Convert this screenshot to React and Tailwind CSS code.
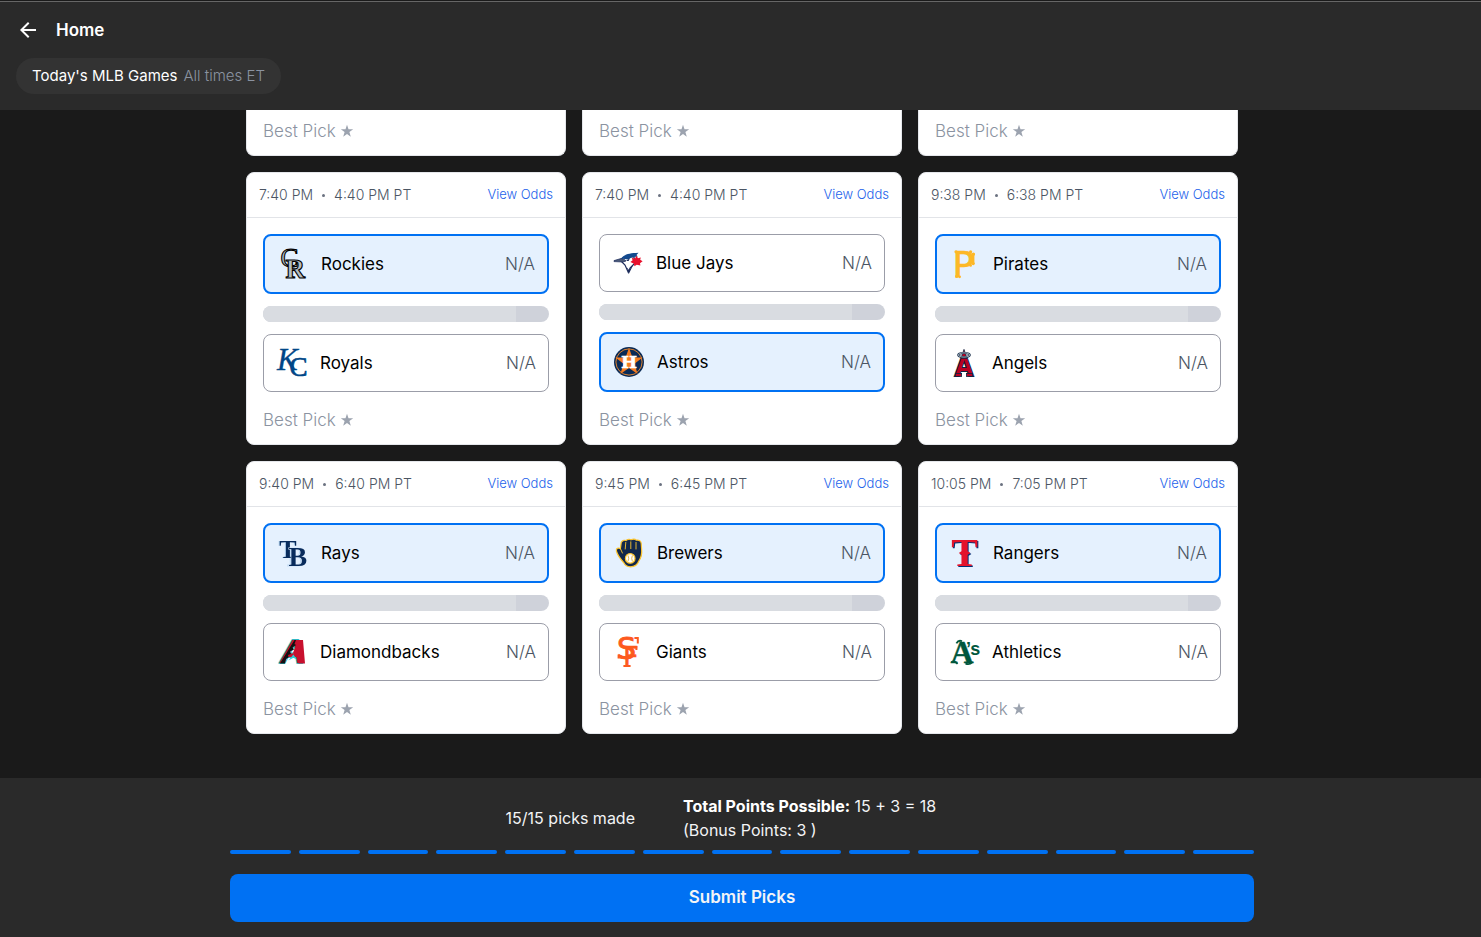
import React, { useState } from "react";
import { MdArrowBack } from "react-icons/md";

const SERIF = "'Liberation Serif', serif";
const SLAB = "'DejaVu Serif', serif";
const SANS = "'Liberation Sans', sans-serif";
const WIDE = "'DejaVu Sans', sans-serif";

function Logo({ children }) {
  return (
    <svg viewBox="0 0 32 32" className="size-8 shrink-0 overflow-visible" aria-hidden="true">
      {children}
    </svg>
  );
}

const logos = {
  Rockies: (
    <Logo>
      <g fontFamily={SERIF} fill="#b4bec4" stroke="#000" strokeWidth="1.1">
        <text x="3.4" y="19.4" fontSize="27">C</text>
        <text x="8.6" y="30.4" fontSize="27" fontWeight="bold">R</text>
      </g>
    </Logo>
  ),
  Royals: (
    <Logo>
      <g fontFamily={SERIF} fill="#004687" stroke="#004687" strokeWidth="0.3">
        <text x="1" y="22.5" fontSize="31" fontStyle="italic">K</text>
        <text x="13.6" y="29" fontSize="27" strokeWidth="0.7">C</text>
      </g>
    </Logo>
  ),
  "Blue Jays": (
    <Logo>
      <path d="M8 13 L13 18 L16.3 25.5 L18 21 L23 16 L22 10 L12 10Z" fill="#fff" stroke="#1d2d5c" strokeWidth="1.2" />
      <path d="M2 13.6 L9 11.5 L12 12.2 L14 14 L11 15 L2 14.6Z" fill="#4b5a78" stroke="#1d2d5c" strokeWidth="0.7" />
      <path d="M9 11.6 C12 7.5 17 6.2 26.5 5.8 L24.5 8 L25.8 9.5 L20 10.3 L16 12.6Z" fill="#134a8e" />
      <path d="M14 14 L18 11 L16.6 14Z" fill="#1d2d5c" />
      <path d="M14.5 20 L17 23 L21.5 17.5 L17 26.6Z" fill="#1d2d5c" />
      <path d="M24.5 8.8 L26 11.2 L28.8 10.4 L28.2 12.8 L30.6 14.2 L28 16.2 L28.4 18.4 L24.8 17.8 L22.4 19.2 L22 16.8 L18.4 15 L20.6 13.2 L19.8 11 L23 11.6Z" fill="#e8112d" />
    </Logo>
  ),
  Astros: (
    <Logo>
      <circle cx="16" cy="16" r="15" fill="#0a2a55" />
      <circle cx="16" cy="16" r="13.1" fill="none" stroke="#f08a2c" strokeWidth="0.9" />
      <path d="M16 1.8 L19.4 11.5 L29.6 11.6 L21.5 17.8 L24.6 28 L16 22 L7.4 28 L10.5 17.8 L2.4 11.6 L12.6 11.5Z" fill="#f47b20" />
      <text x="16" y="22.4" fontSize="17" fontWeight="bold" fontFamily={SLAB} textAnchor="middle" fill="#fff" stroke="#fff" strokeWidth="0.5">H</text>
    </Logo>
  ),
  Pirates: (
    <Logo>
      <text x="3.4" y="29" fontSize="36" fontFamily={WIDE} fill="#fdb827" stroke="#fdb827" strokeWidth="0.6">P</text>
      <g fill="#fdb827">
        <circle cx="7" cy="3.8" r="1.6" />
        <circle cx="7.6" cy="28.4" r="1.6" />
        <circle cx="10.6" cy="28.8" r="1.4" />
        <circle cx="21.6" cy="3.8" r="1.6" />
        <circle cx="24.4" cy="6.2" r="1.6" />
        <circle cx="24.2" cy="15.6" r="1.6" />
        <circle cx="21.6" cy="17.4" r="1.4" />
        <rect x="22.4" y="5" width="3" height="11" />
      </g>
    </Logo>
  ),
  Angels: (
    <Logo>
      <g stroke="#0c2340" fill="#ba0021">
        <text x="16" y="29" fontSize="27" fontWeight="bold" textAnchor="middle" fontFamily={SANS} strokeWidth="2" paintOrder="stroke">A</text>
        <rect x="7.6" y="26.4" width="6" height="3" strokeWidth="0.8" />
        <rect x="18.4" y="26.4" width="6" height="3" strokeWidth="0.8" />
        <path d="M16 2.4 L19 11.4 H13Z" strokeWidth="0.8" />
      </g>
      <ellipse cx="16" cy="8" rx="5.8" ry="2.1" fill="none" stroke="#0c2340" strokeWidth="2" />
      <ellipse cx="16" cy="8" rx="5.8" ry="2.1" fill="none" stroke="#b6c2cc" strokeWidth="0.9" />
    </Logo>
  ),
  Rays: (
    <Logo>
      <g fontFamily={SERIF} fontWeight="bold" fill="#092c5c" className="drop-shadow-[-1px_0px_0px_#b7d6f2]">
        <text x="2.3" y="20.6" fontSize="26">T</text>
        <text x="11.4" y="28.6" fontSize="28" stroke="#e5f1fe" strokeWidth="1" paintOrder="stroke">B</text>
      </g>
    </Logo>
  ),
  Diamondbacks: (
    <Logo>
      <text x="4" y="27.4" fontSize="34" fontWeight="bold" fontStyle="italic" fontFamily={SANS} fill="#c8102e" stroke="#30b8c4" strokeWidth="2" strokeLinejoin="round" paintOrder="stroke">A</text>
      <path d="M4 27.5 L18.5 4 L20 4 L18.5 8 L20 9 L16.5 11.5 L18 13.5 L14 15.5 L15 18 L12 19 L12.6 21.5 L10 23 L9 27.5Z" fill="#111" />
      <path d="M20.5 4 H27 L29 27.5 H22.5 L21 21 L17 17 L18.4 13 L20.4 9Z" fill="#c8102e" />
      <path d="M12.4 24.4 L17.4 18.5 L21 24 L17.5 21.8Z" fill="#30ced8" />
      <path d="M15.2 27 L17.4 23.2 L20 27Z" fill="#fff" />
    </Logo>
  ),
  Brewers: (
    <Logo>
      <path
        d="M11 26 C8 22.6 4.4 18 3.4 14 C3 11.4 5 10.4 7.4 11.6 L8.2 5.6 C9.4 3 12 3 13 3.6 C14.4 2 17 2 18 2.8 C20 1.8 22.4 2.2 23.2 3.2 C26 2.6 28.2 4 28.2 6.6 L28.6 12 C29.2 18 28 21 25.8 24 C24.4 28 21 29.8 17.4 29.8 C14 29.6 12 28 11 26Z"
        fill="#12284b" stroke="#fdc52f" strokeWidth="1.2"
      />
      <path d="M12.8 5 L12.2 12.4 M17.8 4.4 V12 M23 5 V12.4" stroke="#fdc52f" strokeWidth="0.9" fill="none" />
      <path d="M7.4 11.6 L9.6 16.4" stroke="#fdc52f" strokeWidth="0.9" fill="none" />
      <circle cx="17.2" cy="21.4" r="4.8" fill="#fff" stroke="#fdc52f" strokeWidth="1.2" />
      <path d="M15 18.4 Q16.4 21.4 15 24.4 M19.4 18.4 Q18 21.4 19.4 24.4" stroke="#d9a928" strokeWidth="0.8" fill="none" />
    </Logo>
  ),
  Giants: (
    <Logo>
      <g fill="#fd5a1e" stroke="#fd5a1e">
        <text x="5" y="23.4" fontSize="30" fontFamily={WIDE} strokeWidth="0.9">S</text>
        <text x="11" y="30" fontSize="27" fontFamily={WIDE} strokeWidth="0.5">F</text>
      </g>
      <path d="M22.4 2 H25.8 V7.4 M24.4 10 V14 M11.4 30 H18.6 M6.6 18.4 V22.6" fill="none" stroke="#fd5a1e" strokeWidth="2" />
    </Logo>
  ),
  Rangers: (
    <Logo>
      <g className="drop-shadow-[1px_1px_0px_#003278]">
        <text x="15.6" y="28.6" fontFamily={SERIF} fontWeight="bold" fontSize="40" textAnchor="middle" fill="#e4132b">T</text>
        <path d="M9.8 16 L12.5 14.2 H18.7 L21.4 16 L18.7 17.8 H12.5Z" fill="#e4132b" />
      </g>
    </Logo>
  ),
  Athletics: (
    <Logo>
      <g fill="#00573d" stroke="#00573d" fontWeight="bold">
        <text x="2.6" y="27" fontSize="32" fontFamily={SERIF} strokeWidth="0.4">A</text>
        <text x="18" y="19.2" fontSize="18" fontFamily={SANS} strokeWidth="0">’s</text>
      </g>
      <path d="M8.4 7.4 Q10.5 3.6 14 5.2 M3.4 26 Q6.5 24.4 9.6 27.8 M17.5 27.4 Q21 29.4 24.6 26" stroke="#00573d" strokeWidth="1.8" fill="none" />
    </Logo>
  ),
};

const games = [
  { et: "7:40 PM", pt: "4:40 PM PT", teams: ["Rockies", "Royals"], pick: 0 },
  { et: "7:40 PM", pt: "4:40 PM PT", teams: ["Blue Jays", "Astros"], pick: 1 },
  { et: "9:38 PM", pt: "6:38 PM PT", teams: ["Pirates", "Angels"], pick: 0 },
  { et: "9:40 PM", pt: "6:40 PM PT", teams: ["Rays", "Diamondbacks"], pick: 0 },
  { et: "9:45 PM", pt: "6:45 PM PT", teams: ["Brewers", "Giants"], pick: 0 },
  { et: "10:05 PM", pt: "7:05 PM PT", teams: ["Rangers", "Athletics"], pick: 0 },
];

function TeamButton({ name, selected, onClick }) {
  return (
    <button
      type="button"
      aria-pressed={selected}
      onClick={onClick}
      className={
        selected
          ? "flex h-[60px] w-full items-center gap-3 rounded-lg border-2 border-[#0071f3] bg-[#e5f1fe] px-3"
          : "flex h-[58px] w-full items-center gap-3 rounded-lg border border-[#9b9da8] bg-white px-3"
      }
    >
      {logos[name]}
      <span className="text-[17px] leading-6 text-black">{name}</span>
      <span className="ml-auto text-[17px] leading-6 font-light text-[#4b5563]">N/A</span>
    </button>
  );
}

function BestPick() {
  return (
    <button type="button" className="flex items-center gap-1 text-[17px] leading-6 font-light text-[#8b93a1]">
      Best Pick
      <svg viewBox="0 0 14 14" className="size-3.5" fill="#9ca3af" aria-hidden="true">
        <path d="M7 .8 8.5 5.2h4.7L9.4 8l1.4 4.7L7 9.9l-3.8 2.8L4.6 8 .8 5.2h4.7z" />
      </svg>
    </button>
  );
}

function GameCard({ game }) {
  const [pick, setPick] = useState(game.pick);
  return (
    <article className="rounded-lg border border-[#e5e7eb] bg-white">
      <div className="flex h-[45px] items-center justify-between border-b border-[#e2e4e8] px-3">
        <p className="flex items-center gap-2 text-sm font-light text-[#4b5563]">
          <span>{game.et}</span>
          <span className="mx-px size-[3px] rounded-full bg-[#6b7280]" />
          <span>{game.pt}</span>
        </p>
        <a href="#odds" className="text-[13px] font-light text-[#2463eb]">View Odds</a>
      </div>
      <div className="px-4 pt-4 pb-3">
        <TeamButton name={game.teams[0]} selected={pick === 0} onClick={() => setPick(0)} />
        <div className="my-3 flex h-4 overflow-hidden rounded-full bg-[#cfd2da]">
          <div className="w-[88.5%] bg-[#d9dce1]" />
        </div>
        <TeamButton name={game.teams[1]} selected={pick === 1} onClick={() => setPick(1)} />
        <div className="mt-4">
          <BestPick />
        </div>
      </div>
    </article>
  );
}

export default function App() {
  return (
    <div className="flex min-h-screen flex-col bg-[#1a1a1a] pt-px font-['Inter','Liberation_Sans',sans-serif] text-white">
      <header className="border-t border-[#666666] bg-[#2a2a2a] p-4">
        <a href="#home" className="flex w-fit items-center gap-4 text-[17px] leading-6 font-semibold">
          <MdArrowBack size={24} aria-hidden="true" />
          Home
        </a>
        <h1 className="mt-4 flex h-9 w-fit items-center gap-1.5 rounded-full bg-[#333333] px-4 text-[15px] font-normal">
          Today's MLB Games
          <span className="font-light text-[#8b93a1]">All times ET</span>
        </h1>
      </header>

      <main className="flex-1 pb-11 pl-[3px]">
        <div className="mx-auto grid max-w-[992px] grid-cols-1 gap-4 sm:grid-cols-2 lg:grid-cols-3">
          {[0, 1, 2].map((i) => (
            <div key={i} className="rounded-b-lg border border-t-0 border-[#e5e7eb] bg-white px-4 pt-[9px] pb-3">
              <BestPick />
            </div>
          ))}
          {games.map((game) => (
            <GameCard key={game.teams[0]} game={game} />
          ))}
        </div>
      </main>

      <footer className="bg-[#2a2a2a] pt-4 pb-[15px] pl-[3px]">
        <div className="mx-auto max-w-[1024px]">
          <div className="grid grid-cols-[405fr_571fr] items-center gap-12 text-base leading-6 text-[#f3f4f6]">
            <p className="text-right">15/15 picks made</p>
            <div>
              <p>
                <strong className="font-bold text-white">Total Points Possible:</strong> 15 + 3 = 18
              </p>
              <p>(Bonus Points: 3 )</p>
            </div>
          </div>
          <div className="mt-2 flex gap-2">
            {Array.from({ length: 15 }, (_, i) => (
              <div key={i} className="h-1 flex-1 rounded-full bg-[#0071f3]" />
            ))}
          </div>
          <button type="button" className="mt-5 h-12 w-full rounded-lg bg-[#0071f3] text-[17px] font-semibold text-[#f3f4f6]">
            Submit Picks
          </button>
        </div>
      </footer>
    </div>
  );
}
